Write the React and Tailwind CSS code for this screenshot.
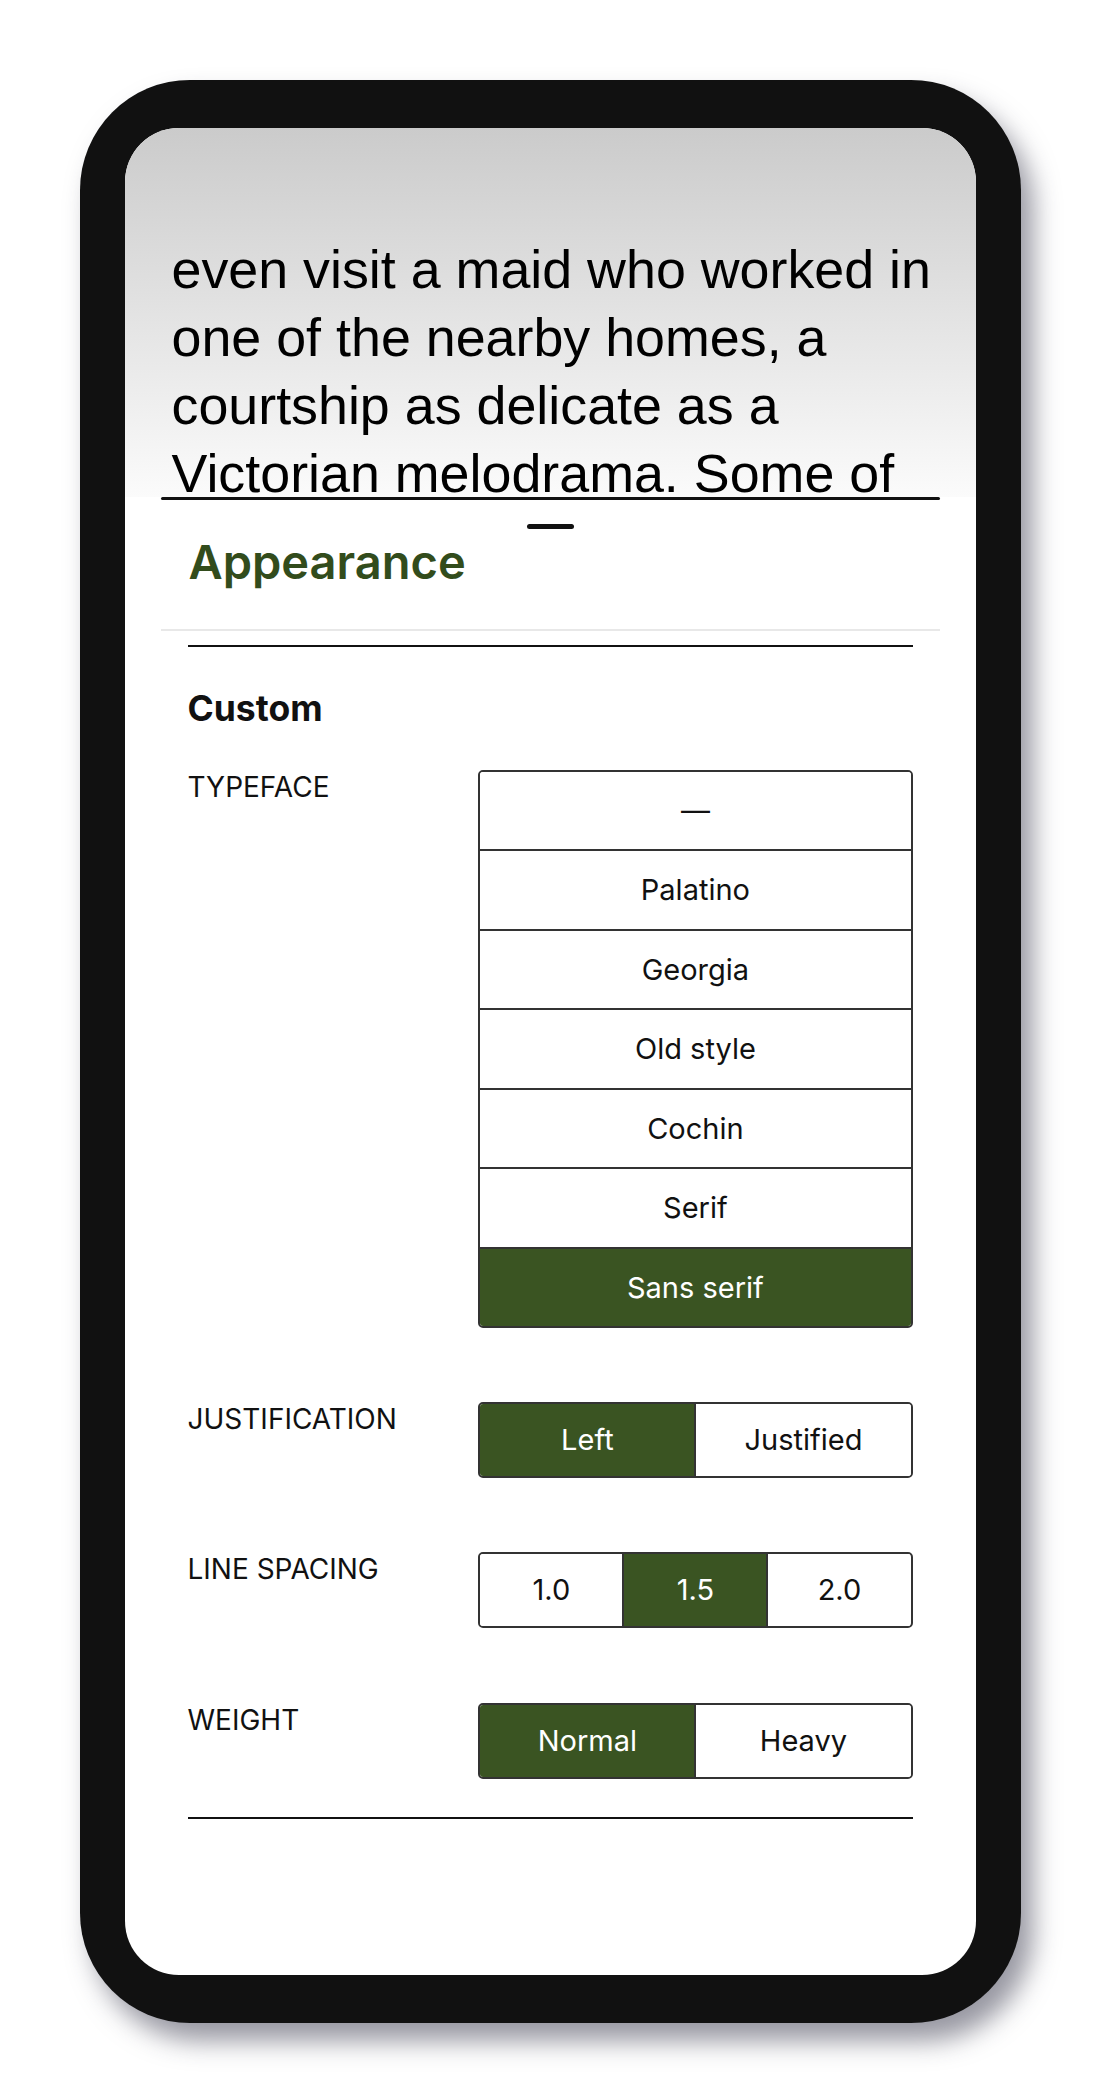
const TYPEFACES = ['—', 'Palatino', 'Georgia', 'Old style', 'Cochin', 'Serif', 'Sans serif'];

const LINES = [
  'even visit a maid who worked in',
  'one of the nearby homes, a',
  'courtship as delicate as a',
  'Victorian melodrama. Some of',
];

function Segmented({ options, selected }) {
  return (
    <div className="flex h-[76px] w-[436px] overflow-hidden rounded-[5px] border-2 border-[#333]">
      {options.map((opt, i) => (
        <div
          key={opt}
          className={`flex flex-1 items-center justify-center text-[29px] ${i > 0 ? 'border-l-2 border-[#333]' : ''} ${
            opt === selected ? 'bg-[#3a5422] text-white' : 'bg-white text-[#111]'
          }`}
        >
          {opt}
        </div>
      ))}
    </div>
  );
}

function Row({ label, children, className = '' }) {
  return (
    <div className={`flex items-start ${className}`}>
      <div className="w-[292px] text-[28px] leading-[34px] text-[#111]">{label}</div>
      {children}
    </div>
  );
}

export default function App() {
  return (
    <div className="min-h-[2100px] bg-white pt-[80px]" style={{ fontFamily: 'Inter, "Liberation Sans", sans-serif' }}>
      <div className="mx-auto w-[941px] rounded-[110px] bg-[#111] px-[45px] py-[48px] shadow-[12px_18px_26px_rgba(50,50,70,0.5)]">
        <div className="h-[1847px] overflow-hidden rounded-[54px] bg-white">
          {/* reading view */}
          <div
            className="h-[369px] bg-gradient-to-b from-[#cbcbcb] to-[#fbfbfb] pl-[47px] pt-[107px] text-[53.8px] leading-[68px] text-black"
            style={{ fontFamily: '"Liberation Sans", Arial, sans-serif' }}
          >
            {LINES.map((l) => (
              <div key={l} className="whitespace-nowrap">{l}</div>
            ))}
          </div>

          {/* appearance sheet */}
          <div className="relative mx-[36px]">
            <div className="h-[3px] rounded-full bg-[#111]" />
            <div className="mt-[24px] flex justify-center">
              <div className="h-[5px] w-[47px] rounded-full bg-[#111]" />
            </div>
            <h1 className="mt-[4px] pl-[28px] text-[47px] font-semibold leading-[58px] text-[#324c1c]">Appearance</h1>
            <div className="mt-[38px] h-[2px] bg-[#e8e8e8]" />

            <div className="px-[27px] pt-[14px]">
              <div className="h-[2px] bg-[#111]" />
              <h2 className="mt-[41px] text-[35.5px] font-bold leading-[42px] text-[#111]">Custom</h2>

              <Row label="TYPEFACE" className="mt-[40px]">
                <div className="w-[436px] overflow-hidden rounded-[5px] border-2 border-[#333]">
                  {TYPEFACES.map((t, i) => (
                    <div
                      key={t}
                      className={`flex items-center justify-center text-[29px] ${i > 0 ? 'h-[79.5px] border-t-2 border-[#333]' : 'h-[77px]'} ${
                        t === 'Sans serif' ? 'bg-[#3a5422] text-white' : 'bg-white text-[#111]'
                      }`}
                    >
                      {t}
                    </div>
                  ))}
                </div>
              </Row>

              <Row label="JUSTIFICATION" className="mt-[74px]">
                <Segmented options={['Left', 'Justified']} selected="Left" />
              </Row>

              <Row label="LINE SPACING" className="mt-[74px]">
                <Segmented options={['1.0', '1.5', '2.0']} selected="1.5" />
              </Row>

              <Row label="WEIGHT" className="mt-[75px]">
                <Segmented options={['Normal', 'Heavy']} selected="Normal" />
              </Row>

              <div className="mt-[38px] h-[2px] bg-[#111]" />
            </div>
          </div>
        </div>
      </div>
    </div>
  );
}
